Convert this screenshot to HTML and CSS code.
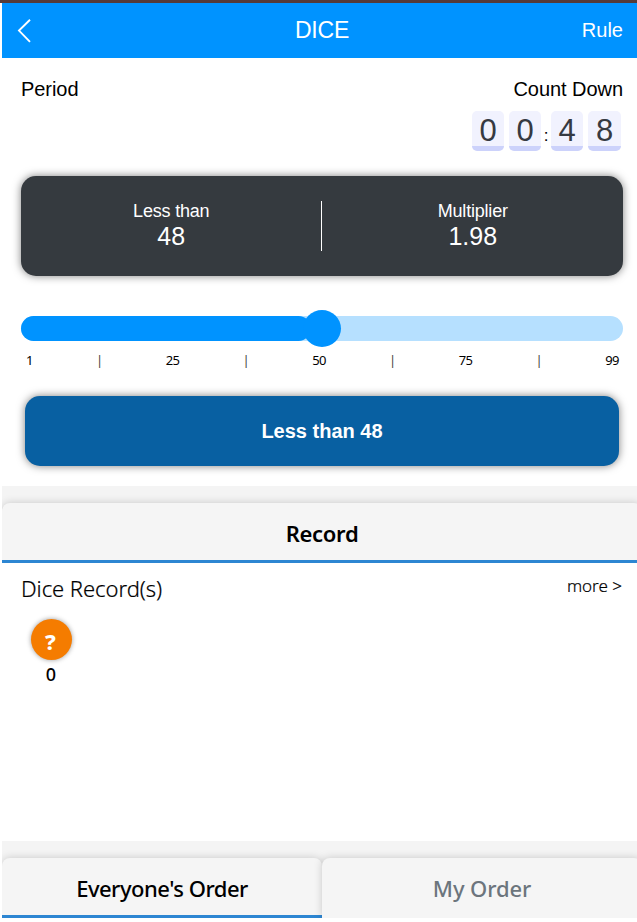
FILE: index.html
```html
<!DOCTYPE html>
<html lang="en">
<head>
<meta charset="utf-8">
<title>DICE</title>
<link rel="stylesheet" href="styles.css">
</head>
<body>
<div class="app">
  <header class="bar">
    <svg class="back" width="16" height="26" viewBox="0 0 16 26"><path d="M14 1.8 3 12.6 14 23.8" fill="none" stroke="#fff" stroke-width="1.9"/></svg>
    <h1 class="title">DICE</h1>
    <a class="rule">Rule</a>
  </header>
  <main>
    <section class="play">
      <div class="period">
        <div class="label">Period</div>
        <div class="count">
          <div class="label">Count Down</div>
          <div class="clock"><b>0</b><b>0</b><i>:</i><b>4</b><b>8</b></div>
        </div>
      </div>
      <div class="odds">
        <div class="odd"><span>Less than</span><strong>48</strong></div>
        <div class="divider"></div>
        <div class="odd"><span>Multiplier</span><strong>1.98</strong></div>
      </div>
      <div class="slider"><div class="fill"></div><div class="thumb"></div></div>
      <div class="ticks"><span>1</span><span class="mark">|</span><span>25</span><span class="mark">|</span><span>50</span><span class="mark">|</span><span>75</span><span class="mark">|</span><span>99</span></div>
      <button class="bet">Less than 48</button>
    </section>
    <div class="tabs"><div class="tab active record-tab"><span>Record</span></div></div>
    <section class="records">
      <div class="records-head"><h2>Dice Record(s)</h2><a>more &gt;</a></div>
      <div class="result"><div class="ball">?</div><div class="num">0</div></div>
    </section>
    <div class="tabs orders"><div class="tab active everyone"><span>Everyone's Order</span></div><div class="tab mine"><span>My Order</span></div></div>
  </main>
</div>
</body>
</html>
```
FILE: styles.css
```css
* { box-sizing: border-box; }
html { overflow: hidden; background: #fff; }
body {
  margin: 0;
  height: 922px;
  overflow: hidden;
  border-top: 3px solid #553a38;
  font-family: "Liberation Sans", Arial, sans-serif;
  color: #000;
}
.app { width: 640px; margin-left: 2px; }
.bar {
  height: 55px;
  padding: 0 19px 0 14px;
  display: grid;
  grid-template-columns: 60px 1fr 55px;
  align-items: center;
  background: #0093ff;
  color: #fff;
}
.back { display: block; }
.title { margin: 0; font-size: 23px; font-weight: 400; text-align: center; letter-spacing: -0.2px; }
.rule { font-size: 20px; text-align: right; }
.play { height: 428px; padding: 18px 19px 0; }
.period { display: flex; justify-content: space-between; height: 100px; }
.label { font-size: 20px; line-height: 26px; letter-spacing: -0.05px; }
.count { text-align: right; }
.clock { display: flex; align-items: flex-end; justify-content: flex-end; margin: 9px 2px 0 0; }
.clock b {
  width: 32px;
  height: 40px;
  margin-left: 5px;
  border-radius: 5px;
  border-bottom: 5px solid #ccd2fb;
  background: #f1f2fe;
  color: #363a42;
  font-size: 31px;
  font-weight: 400;
  line-height: 39px;
  text-align: center;
}
.clock b:first-child { margin-left: 0; }
.clock b:last-child { width: 33px; }
.clock i { width: 10px; font-style: normal; font-size: 17px; line-height: 20px; padding: 0 0 5px; text-align: center; }
.clock i + b { margin-left: 0; }
.odds {
  height: 100px;
  border-radius: 15px;
  display: flex;
  align-items: center;
  background: #353a3f;
  color: #fff;
  box-shadow: 0 0 8px rgba(0, 0, 0, .5);
}
.odd { flex: 1; display: flex; flex-direction: column; align-items: center; padding-bottom: 2px; }
.odd span { font-size: 18px; line-height: 22px; letter-spacing: -0.2px; }
.odd strong { font-size: 25px; font-weight: 400; line-height: 29px; }
.divider { width: 1px; height: 50px; margin: 0 1px 0 -1px; background: #fff; }
.slider {
  position: relative;
  height: 25px;
  margin-top: 40px;
  border-radius: 13px;
  background: #b6e0ff;
}
.fill { width: 290px; height: 25px; border-radius: 13px; background: #0093ff; }
.thumb {
  position: absolute;
  left: 282px;
  top: -6px;
  width: 38px;
  height: 37px;
  border-radius: 50%;
  background: #0093ff;
}
.ticks {
  display: flex;
  justify-content: space-between;
  margin-top: 10px;
  padding: 0 4px 0 5px;
  font: 13px/18px "Noto Sans", sans-serif;
  letter-spacing: -0.6px;
}
.mark { color: #444; }
.bet {
  display: block;
  width: 594px;
  height: 70px;
  margin: 27px auto 0;
  border: 0;
  border-radius: 15px;
  background: #0860a2;
  color: #fff;
  font: bold 20px "Liberation Sans", Arial, sans-serif;
  box-shadow: 0 0 8px rgba(0, 0, 0, .5);
}
.tabs {
  display: flex;
  height: 77px;
  padding-top: 17px;
  background: #f4f4f4;
  overflow: hidden;
}
.tab {
  flex: 1;
  height: 60px;
  border-bottom: 3px solid transparent;
  border-radius: 8px 8px 0 0;
  background: #f5f5f5;
  box-shadow: 0 0 8px rgba(0, 0, 0, .18);
  font: 500 22px/61px "Noto Sans", sans-serif;
  text-align: center;
}
.active { border-bottom-color: #2d86d2; }
.record-tab { font-weight: 600; letter-spacing: -0.3px; }
.everyone { letter-spacing: -0.5px; }
.mine { color: #6c757d; letter-spacing: -0.1px; }
.records { height: 278px; padding: 7px 20px 0 19px; }
.records-head { display: flex; justify-content: space-between; }
.records h2 { margin: 0; font: 300 22px/36px "Noto Sans", sans-serif; letter-spacing: -0.05px; -webkit-text-stroke: .2px #000; }
.records-head a { font: 300 17px/31px "Noto Sans", sans-serif; -webkit-text-stroke: .2px #000; }
.result { width: 60px; padding-top: 13px; display: flex; flex-direction: column; align-items: center; }
.ball {
  width: 41px;
  height: 41px;
  border-radius: 50%;
  background: #f57c00;
  color: #fff;
  font: 800 22px/45px "Noto Sans", sans-serif;
  text-align: center;
  text-indent: -1px;
  box-shadow: 0 0 5px rgba(0, 0, 0, .4);
}
.num { font: 500 18px/28px "Noto Sans", sans-serif; }
```
